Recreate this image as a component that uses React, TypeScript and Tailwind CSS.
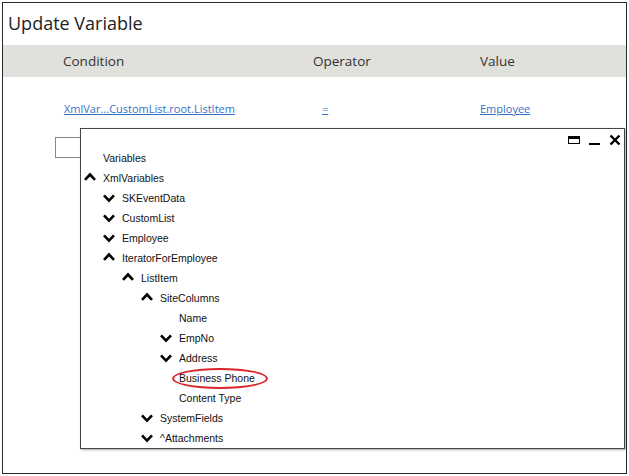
import React from "react";

type Node = { label: string; level: number; state?: "open" | "closed"; mark?: boolean };

const tree: Node[] = [
  { label: "Variables", level: 0 },
  { label: "XmlVariables", level: 0, state: "open" },
  { label: "SKEventData", level: 1, state: "closed" },
  { label: "CustomList", level: 1, state: "closed" },
  { label: "Employee", level: 1, state: "closed" },
  { label: "IteratorForEmployee", level: 1, state: "open" },
  { label: "ListItem", level: 2, state: "open" },
  { label: "SiteColumns", level: 3, state: "open" },
  { label: "Name", level: 4 },
  { label: "EmpNo", level: 4, state: "closed" },
  { label: "Address", level: 4, state: "closed" },
  { label: "Business Phone", level: 4, mark: true },
  { label: "Content Type", level: 4 },
  { label: "SystemFields", level: 3, state: "closed" },
  { label: "^Attachments", level: 3, state: "closed" },
];

const indent = ["pl-[3px]", "pl-[22px]", "pl-[41px]", "pl-[60px]", "pl-[79px]"];

function Chevron({ open }: { open: boolean }) {
  return (
    <svg width="12" height="9" viewBox="0 0 12 9" className={open ? "-mt-[5px]" : "-mt-[2px]"}>
      <polyline
        points={open ? "1,7.8 6,2.5 11,7.8" : "1,1.3 6,6.6 11,1.3"}
        fill="none"
        stroke="#000"
        strokeWidth="2.6"
      />
    </svg>
  );
}

export default function App() {
  return (
    <div className="w-[629px] h-[476px] bg-white p-[2px] font-['Open_Sans',sans-serif]">
      <div className="relative h-full border border-[#2a2a2a] bg-white">
        {/* Title */}
        <div className="h-[42px] pl-[5px] pt-[8px] text-[18px] leading-[24px] text-[#222]">
          Update Variable
        </div>

        {/* Header */}
        <div className="h-[32px] bg-[#e0e0dc] flex items-center text-[13.5px] text-[#333]">
          <div className="w-[310px] pl-[60px]">Condition</div>
          <div className="w-[167px]">Operator</div>
          <div>Value</div>
        </div>

        {/* Row */}
        <div className="flex items-center mt-[24px] h-[16px] text-[11px] text-[#3572c4]">
          <div className="w-[310px] pl-[61px]">
            <a className="underline">XmlVar...CustomList.root.ListItem</a>
          </div>
          <div className="w-[167px] pl-[9px]">
            <a className="underline">=</a>
          </div>
          <div>
            <a className="underline">Employee</a>
          </div>
        </div>

        <div className="mt-[20px] ml-[52px] w-[26px] h-[21px] border border-[#888]" />

        {/* Popup */}
        <div className="absolute left-[77px] top-[125px] w-[545px] h-[321px] border border-[#444] bg-white shadow-[1px_1px_2px_rgba(0,0,0,0.35)] font-['Liberation_Sans',sans-serif]">
          <div className="absolute top-[5px] right-[3px] flex items-center gap-[9px]">
            <div className="w-[12px] h-[8px] border-[1.5px] border-black border-t-[3px]" />
            <div className="w-[11px] h-[2px] bg-black mt-[8px]" />
            <svg width="12" height="12" viewBox="0 0 12 12">
              <path d="M1.5 1.5 L10.5 10.5 M10.5 1.5 L1.5 10.5" stroke="#000" strokeWidth="2.4" />
            </svg>
          </div>

          <div className="pt-[20px] text-[10.5px] text-[#111]">
            {tree.map((n) => (
              <div key={n.label} className={`h-[20px] flex items-center ${indent[n.level]}`}>
                <div className="w-[19px] flex items-center">
                  {n.state && <Chevron open={n.state === "open"} />}
                </div>
                {n.mark ? (
                  <span className="relative">
                    Business Phone
                    <span className="absolute -left-[7px] -top-[3px] w-[96px] h-[21px] border-2 border-[#d8262a] rounded-[50%]" />
                  </span>
                ) : (
                  <span>{n.label}</span>
                )}
              </div>
            ))}
          </div>
        </div>
      </div>
    </div>
  );
}
